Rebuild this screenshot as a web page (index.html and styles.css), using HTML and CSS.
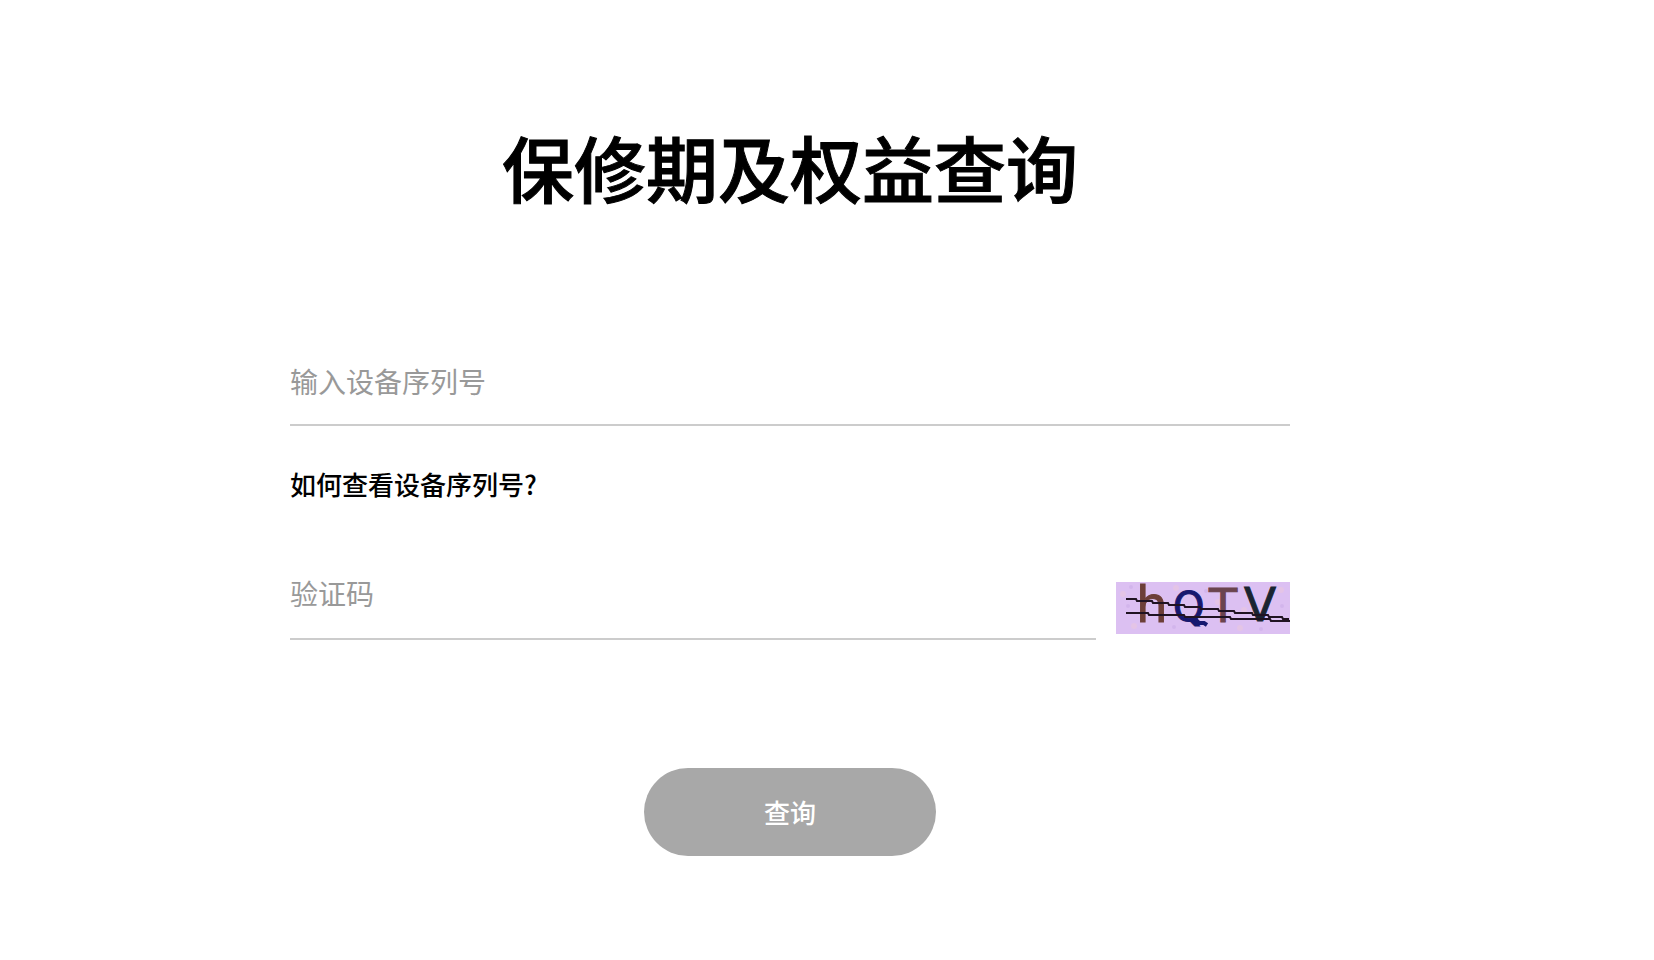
FILE: index.html
```html
<!DOCTYPE html>
<html lang="zh-CN">
<head>
<meta charset="utf-8">
<meta name="viewport" content="width=device-width, initial-scale=1">
<title>保修期及权益查询</title>
<link rel="stylesheet" href="styles.css">
</head>
<body>
<main class="page">
  <h1 class="title">保修期及权益查询</h1>
  <form class="form">
    <input class="field" type="text" placeholder="输入设备序列号" aria-label="输入设备序列号">
    <a class="help" href="#">如何查看设备序列号?</a>
    <div class="captcha-row">
      <input class="field field-code" type="text" placeholder="验证码" aria-label="验证码">
      <svg class="captcha" viewBox="0 0 174 52" role="img" aria-label="hQTV">
        <rect width="174" height="52" fill="#dcc0f2"/>
        <g fill="#e4c4e6">
          <circle cx="7" cy="12" r="3"/><circle cx="60" cy="6" r="3"/><circle cx="102" cy="20" r="3"/><circle cx="128" cy="28" r="3"/><circle cx="165" cy="8" r="3"/><circle cx="18" cy="44" r="3"/><circle cx="124" cy="46" r="3"/>
        </g>
        <g fill="#d2b5ec">
          <circle cx="15" cy="5" r="2"/><circle cx="12" cy="24" r="2"/><circle cx="90" cy="9" r="2"/><circle cx="145" cy="47" r="2"/><circle cx="58" cy="45" r="2"/><circle cx="166" cy="24" r="2"/>
        </g>
        <g class="captcha-text">
          <text x="20" y="40" font-size="50" fill="#6d3f38" stroke="#6d3f38">h</text>
          <text x="57" y="39" font-size="40" fill="#17186f" stroke="#17186f">Q</text>
          <text x="93" y="40" font-size="46" fill="#6b444e" stroke="#6b444e">T</text>
          <text x="128" y="39" font-size="47" fill="#1a2431" stroke="#1a2431">V</text>
        </g>
        <path d="M78 36l5 5h5l3 2" fill="none" stroke="#17186f" stroke-width="4"/>
        <g fill="none" stroke="#201322" stroke-width="2">
          <path d="M10 17h10l1 2h15l1 2h15l1 2h15l1 2h15l1 2h17l1 2h15l1 2h17l1 2h15l1 2h13l1 2h6"/>
          <path d="M10 31h22l1 2h35l1 2h45l1 2h39l1 2h19"/>
        </g>
      </svg>
    </div>
    <button class="submit" type="submit">查询</button>
  </form>
</main>
</body>
</html>
```
FILE: styles.css
```css
* {
  box-sizing: border-box;
}

body {
  margin: 0;
  background: #fff;
  color: #000;
  font-family: "Noto Sans CJK SC", sans-serif;
}

.page {
  display: flex;
  flex-direction: column;
  align-items: center;
  padding: 112px 112px 104px 38px;
}

.title {
  margin: 0 0 134px;
  font-size: 72px;
  font-weight: 500;
  line-height: 108px;
  -webkit-text-stroke: 1px #000;
}

.form {
  display: flex;
  flex-direction: column;
  width: 100%;
  max-width: 1000px;
}

.field {
  display: block;
  width: 100%;
  min-width: 0;
  height: 72px;
  padding: 0 0 16px;
  border: 0;
  border-bottom: 2px solid #ccc;
  border-radius: 0;
  outline: 0;
  background: transparent;
  color: #000;
  font-family: inherit;
  font-size: 28px;
  font-weight: 400;
}

.field-code {
  padding-bottom: 20px;
}

.field::placeholder {
  color: #999;
  opacity: 1;
}

.help {
  align-self: flex-start;
  margin-top: 38px;
  color: #000;
  font-size: 26px;
  font-weight: 500;
  line-height: 40px;
  text-decoration: none;
}

.captcha-row {
  display: flex;
  align-items: flex-end;
  gap: 20px;
  margin-top: 64px;
}

.captcha {
  flex: none;
  width: 174px;
  height: 52px;
  margin-bottom: 6px;
  overflow: visible;
}

.captcha-text {
  font-family: "DejaVu Sans", sans-serif;
}

.submit {
  align-self: center;
  width: 292px;
  height: 88px;
  margin-top: 128px;
  padding: 0 0 2px;
  border: 0;
  border-radius: 44px;
  background: #a8a8a8;
  color: #fff;
  font-family: inherit;
  font-size: 26px;
  font-weight: 500;
}
```
